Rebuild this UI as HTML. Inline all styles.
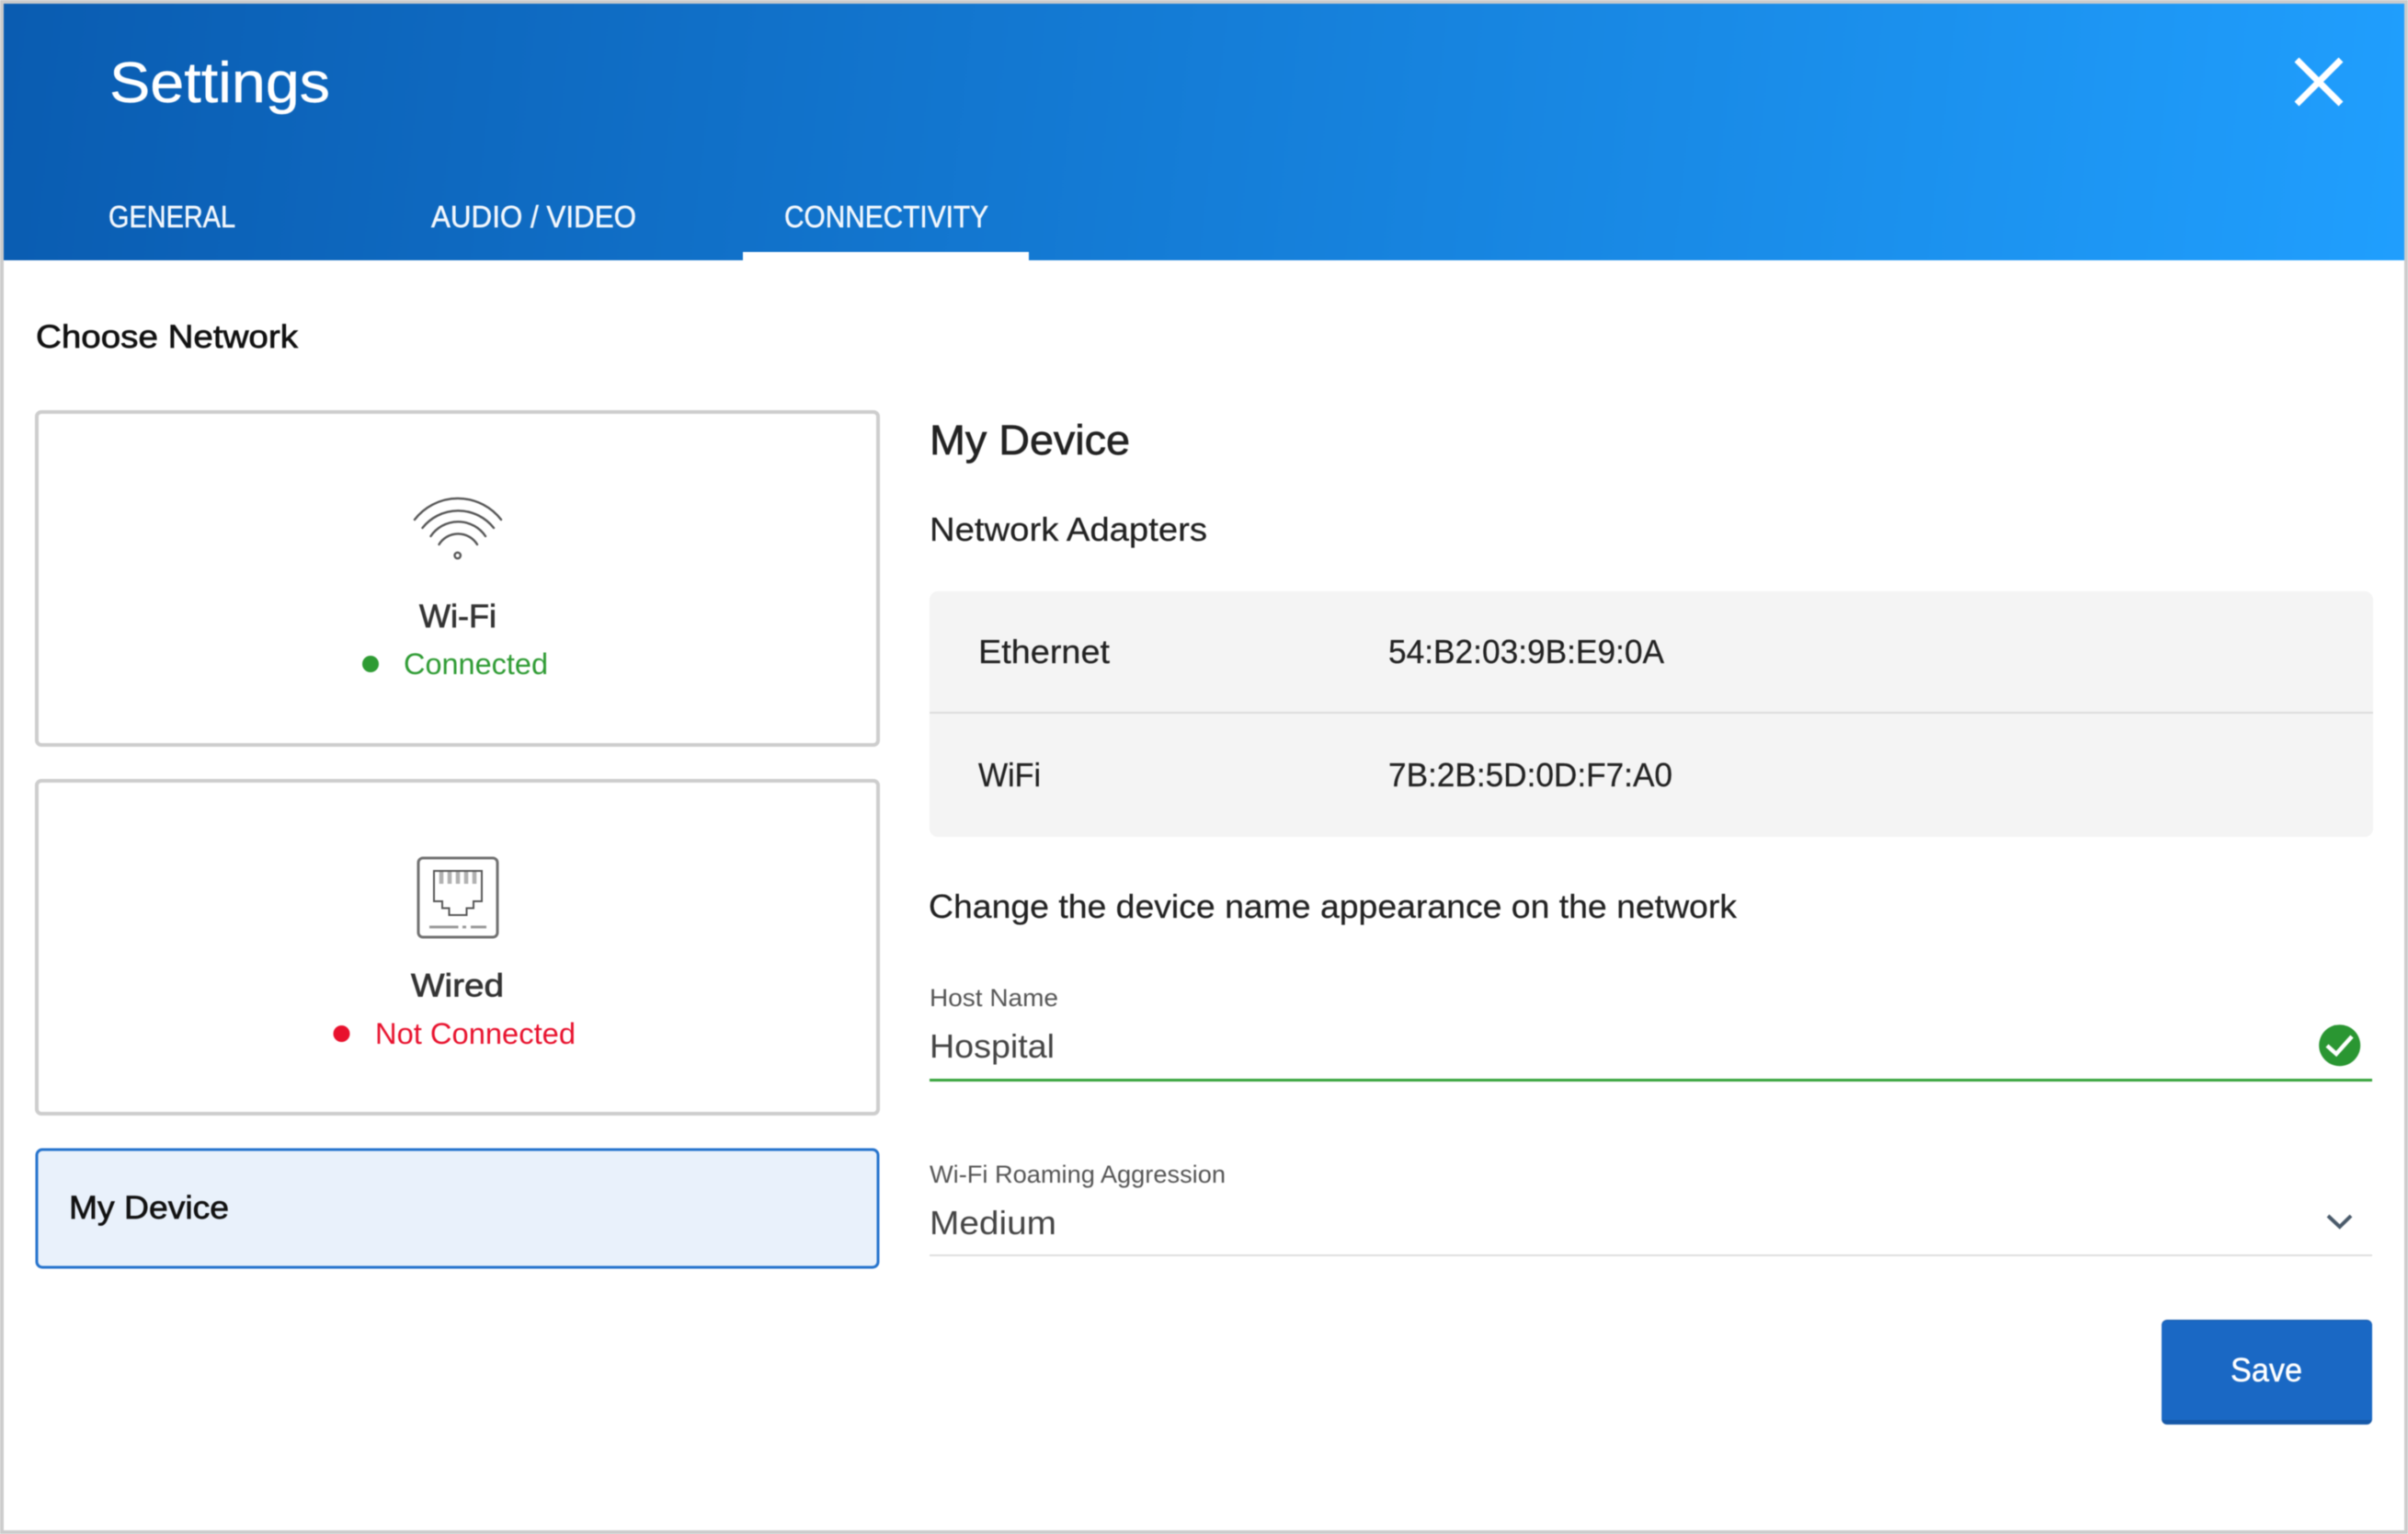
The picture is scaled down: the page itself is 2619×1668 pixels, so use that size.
<!DOCTYPE html>
<html lang="en"><head><meta charset="utf-8"><title>Settings</title>
<style>
html,body{margin:0;padding:0;background:#fff}
body{width:2619px;height:1668px;overflow:hidden}
svg{display:block;filter:blur(.5px)}
text{font-family:"Liberation Sans",Arial,sans-serif}
.s{stroke-width:.7px;paint-order:stroke}
.t{stroke:#fff;stroke-width:.45px}
.d{stroke:#222;stroke-width:.25px}
</style></head><body>
<svg width="2619" height="1668" viewBox="0 0 2619 1668" xmlns="http://www.w3.org/2000/svg">
<defs><linearGradient id="g" gradientUnits="userSpaceOnUse" x1="0" y1="0" x2="2619" y2="300"><stop offset="0" stop-color="#0a5cb1"/><stop offset="1" stop-color="#209ffe"/></linearGradient></defs>
<rect width="2619" height="1668" fill="#cccccc"/>
<rect x="4" y="4" width="2611" height="1660" fill="#fff"/>
<rect x="4" y="4" width="2611" height="279" fill="url(#g)"/>
<text class="t" x="119" y="111" font-size="62" fill="#fff" textLength="240" lengthAdjust="spacingAndGlyphs">Settings</text>
<text class="t" x="118" y="247" font-size="33" fill="#f2f7fd" textLength="138" lengthAdjust="spacingAndGlyphs">GENERAL</text>
<text class="t" x="469" y="247" font-size="33" fill="#f2f7fd" textLength="223" lengthAdjust="spacingAndGlyphs">AUDIO / VIDEO</text>
<text class="t" x="853" y="247" font-size="33" fill="#f2f7fd" textLength="222" lengthAdjust="spacingAndGlyphs">CONNECTIVITY</text>
<rect x="808" y="274" width="311" height="10" fill="#fff"/>
<path d="M2498 65L2546 113M2546 65L2498 113" stroke="#fff" stroke-width="7" fill="none"/>
<text class="s" x="39" y="378" font-size="35" fill="#111" stroke="#111" textLength="285" lengthAdjust="spacingAndGlyphs">Choose Network</text>

<rect x="40" y="448" width="915" height="362" rx="5" fill="#fff" stroke="#cdcdcd" stroke-width="4"/>
<g fill="none" stroke="#555" stroke-width="2.4" stroke-linecap="round">
<path d="M451 565A59.500 59.500 0 0 1 545 565"/>
<path d="M459.500 574A49.500 49.500 0 0 1 537 574"/>
<path d="M468.500 583A36 36 0 0 1 528 583"/>
<path d="M477.500 592A24.400 24.400 0 0 1 519 592"/>
<circle cx="497.700" cy="604" r="3.200"/>
</g>
<text class="s" x="456" y="682" font-size="35" fill="#333" stroke="#333" textLength="84" lengthAdjust="spacingAndGlyphs">Wi-Fi</text>
<circle cx="403" cy="722" r="9" fill="#2e9b33"/>
<text x="439" y="733" font-size="32" fill="#2e9b33" textLength="157" lengthAdjust="spacingAndGlyphs">Connected</text>

<rect x="40" y="849" width="915" height="362" rx="5" fill="#fff" stroke="#cdcdcd" stroke-width="4"/>
<g fill="none" stroke-linecap="butt">
<rect x="455" y="933" width="86" height="86" rx="5" stroke="#707070" stroke-width="3"/>
<path d="M472 947V980H481V987.500H488.500V995H507.500V987.500H515V980H524V947Z" stroke="#555" stroke-width="2"/>
<path d="M480 948V961M489 948V961M498 948V961M507 948V961M516 948V961" stroke="#b0b0b0" stroke-width="4.500"/>
<path d="M467 1008H498.500M503 1008H507M512 1008H529" stroke="#999" stroke-width="3"/>
</g>
<text class="s" x="447" y="1083.500" font-size="35" fill="#333" stroke="#333" textLength="101" lengthAdjust="spacingAndGlyphs">Wired</text>
<circle cx="371.500" cy="1124" r="9" fill="#e8112d"/>
<text x="408" y="1135" font-size="32" fill="#e8112d" textLength="218" lengthAdjust="spacingAndGlyphs">Not Connected</text>

<rect x="40" y="1250" width="915" height="128" rx="6" fill="#e9f1fb" stroke="#2472cc" stroke-width="3"/>
<text class="s" x="75" y="1325" font-size="35" fill="#111" stroke="#111" textLength="174" lengthAdjust="spacingAndGlyphs">My Device</text>

<text class="s" x="1011" y="494" font-size="45" fill="#222" stroke="#222" textLength="218" lengthAdjust="spacingAndGlyphs">My Device</text>
<text class="d" x="1011" y="588" font-size="36" fill="#222" textLength="302" lengthAdjust="spacingAndGlyphs">Network Adapters</text>
<rect x="1011" y="643" width="1570" height="267" rx="9" fill="#f4f4f4"/>
<rect x="1011" y="774" width="1570" height="2" fill="#dcdcdc"/>
<text class="d" x="1064" y="721" font-size="36" fill="#222" textLength="143" lengthAdjust="spacingAndGlyphs">Ethernet</text>
<text class="d" x="1510" y="721" font-size="36" fill="#222" textLength="300" lengthAdjust="spacingAndGlyphs">54:B2:03:9B:E9:0A</text>
<text class="d" x="1064" y="855" font-size="36" fill="#222" textLength="68" lengthAdjust="spacingAndGlyphs">WiFi</text>
<text class="d" x="1510" y="855" font-size="36" fill="#222" textLength="309" lengthAdjust="spacingAndGlyphs">7B:2B:5D:0D:F7:A0</text>
<text class="d" x="1010" y="998" font-size="36" fill="#222" textLength="879" lengthAdjust="spacingAndGlyphs">Change the device name appearance on the network</text>

<text x="1011" y="1094" font-size="27" fill="#555" textLength="140" lengthAdjust="spacingAndGlyphs">Host Name</text>
<text x="1011" y="1150" font-size="36" fill="#444" textLength="136" lengthAdjust="spacingAndGlyphs">Hospital</text>
<rect x="1011" y="1173" width="1569" height="3" fill="#36a33c"/>
<circle cx="2544.700" cy="1136.700" r="22.500" fill="#2a9632"/>
<path d="M2531 1137L2541 1146L2558 1127" fill="none" stroke="#fff" stroke-width="4.500"/>

<text x="1011" y="1286" font-size="27" fill="#555" textLength="322" lengthAdjust="spacingAndGlyphs">Wi-Fi Roaming Aggression</text>
<text x="1011" y="1342" font-size="36" fill="#444" textLength="138" lengthAdjust="spacingAndGlyphs">Medium</text>
<path d="M2532 1322L2544.700 1334L2557 1322" fill="none" stroke="#4a5a6a" stroke-width="4"/>
<rect x="1011" y="1364" width="1569" height="2" fill="#dedede"/>

<rect x="2351" y="1435" width="229" height="114" rx="6" fill="#1558a8"/>
<path d="M2357 1436H2574A6 6 0 0 1 2580 1442V1544H2351V1442A6 6 0 0 1 2357 1436Z" fill="#1a68c4"/>
<text class="t" x="2426" y="1502" font-size="36" fill="#fff" textLength="78" lengthAdjust="spacingAndGlyphs">Save</text>
</svg>
</body></html>
